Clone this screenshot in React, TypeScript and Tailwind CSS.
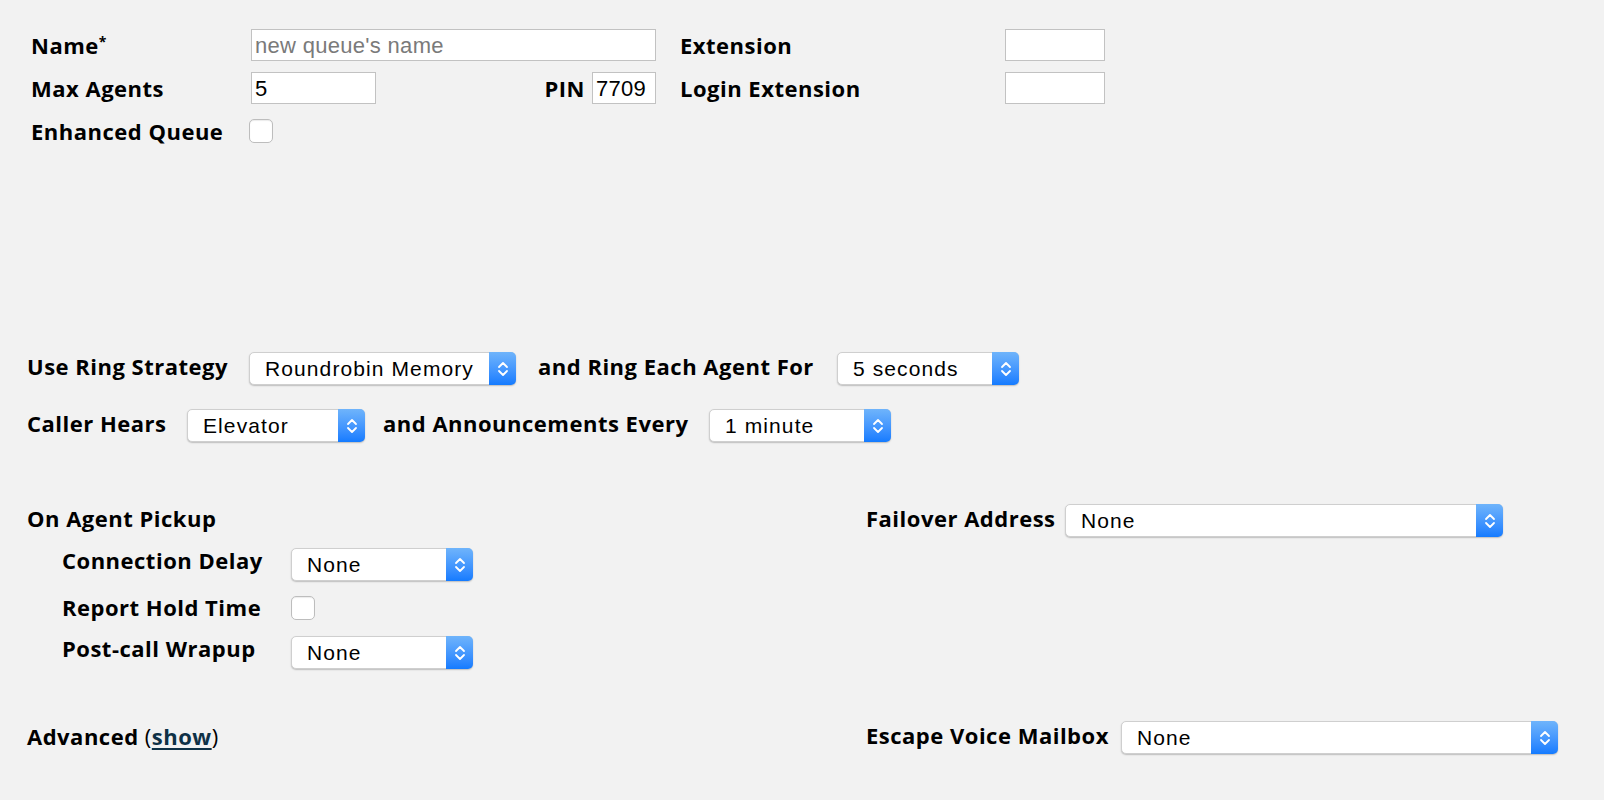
import React from "react";

function Chevrons() {
  return (
    <svg width="12" height="18" viewBox="0 0 12 18" fill="none">
      <path d="M2 7 L6 3 L10 7" stroke="white" strokeWidth="1.8" strokeLinecap="round" strokeLinejoin="round" />
      <path d="M2 11 L6 15 L10 11" stroke="white" strokeWidth="1.8" strokeLinecap="round" strokeLinejoin="round" />
    </svg>
  );
}

function Select({ value, className }: { value: string; className: string }) {
  return (
    <div
      className={
        "flex h-[33px] shrink-0 items-stretch rounded-[5px] border border-[#cfcfcf] bg-white shadow-[0_1px_1.5px_rgba(0,0,0,0.22)] " +
        className
      }
    >
      <div className="flex flex-1 items-center whitespace-nowrap pl-[15px] font-['Liberation_Sans',sans-serif] text-[21px] tracking-[1.1px] text-black">
        {value}
      </div>
      <div className="-my-px -mr-px flex w-[27px] items-center justify-center rounded-r-[5px] bg-gradient-to-b from-[#6fb4fb] to-[#137bff]">
        <Chevrons />
      </div>
    </div>
  );
}

function Checkbox() {
  return (
    <div className="h-[24px] w-[24px] shrink-0 rounded-[5px] border border-[#bdbdbd] bg-white shadow-[inset_0_1px_1px_rgba(0,0,0,0.08)]" />
  );
}

function TextInput({ value, placeholder, className }: { value?: string; placeholder?: string; className: string }) {
  return (
    <div
      className={
        "flex h-[32px] shrink-0 items-center overflow-hidden whitespace-nowrap border border-[#c2c2c2] bg-white px-[3px] font-['Liberation_Sans',sans-serif] text-[22px] tracking-[0.3px] " +
        className
      }
    >
      {value ? <span className="text-black">{value}</span> : <span className="text-[#7a7a7a]">{placeholder}</span>}
    </div>
  );
}

export default function App() {
  const label =
    "font-['Open_Sans',sans-serif] font-bold text-[22px] tracking-[0.5px] text-black leading-none whitespace-nowrap shrink-0";
  const lowLabel = label + " pb-[5px]";
  return (
    <div className="min-h-[800px] w-full bg-[#f2f2f2] text-black">
      {/* Top section */}
      <div className="pl-[31px] pt-[29px]">
        <div className="flex h-[32px] items-center">
          <div className={label + " w-[220px]"}>
            Name<sup className="text-[14px]">*</sup>
          </div>
          <TextInput placeholder="new queue's name" className="w-[405px]" />
          <div className={label + " ml-[24px] w-[325px]"}>Extension</div>
          <TextInput className="w-[100px]" />
        </div>
        <div className="mt-[11px] flex h-[32px] items-center">
          <div className={label + " w-[220px]"}>Max Agents</div>
          <div className="flex w-[405px] items-center justify-between">
            <TextInput value="5" className="h-[31px] w-[125px]" />
            <div className="flex items-center gap-[7px]">
              <div className={label}>PIN</div>
              <TextInput value="7709" className="w-[64px]" />
            </div>
          </div>
          <div className={label + " ml-[24px] w-[325px]"}>Login Extension</div>
          <TextInput className="w-[100px]" />
        </div>
        <div className="mt-[11px] flex h-[32px] items-center">
          <div className={label + " w-[218px]"}>Enhanced Queue</div>
          <Checkbox />
        </div>
      </div>

      {/* Ring strategy */}
      <div className="mt-[205px] pl-[27px]">
        <div className="flex items-center">
          <div className={lowLabel + " w-[222px]"}>Use Ring Strategy</div>
          <Select value="Roundrobin Memory" className="w-[267px]" />
          <div className={lowLabel + " ml-[22px] w-[299px]"}>and Ring Each Agent For</div>
          <Select value="5 seconds" className="w-[182px]" />
        </div>
        <div className="mt-[24px] flex items-center">
          <div className={lowLabel + " w-[160px]"}>Caller Hears</div>
          <Select value="Elevator" className="w-[178px]" />
          <div className={lowLabel + " ml-[18px] w-[326px]"}>and Announcements Every</div>
          <Select value="1 minute" className="w-[182px]" />
        </div>
      </div>

      {/* Lower two-column section */}
      <div className="mt-[62px] flex pl-[27px]">
        <div className="w-[839px] shrink-0">
          <div className="flex h-[33px] items-center">
            <div className={lowLabel}>On Agent Pickup</div>
          </div>
          <div className="pl-[35px]">
            <div className="mt-[11px] flex items-start">
              <div className={label + " w-[229px] pt-[1px]"}>Connection Delay</div>
              <Select value="None" className="w-[182px]" />
            </div>
            <div className="mt-[15px] flex items-center">
              <div className={label + " w-[229px] pb-[2px]"}>Report Hold Time</div>
              <Checkbox />
            </div>
            <div className="mt-[16px] flex items-start">
              <div className={label + " w-[229px] pt-[1px]"}>Post-call Wrapup</div>
              <Select value="None" className="w-[182px]" />
            </div>
          </div>
          <div className="mt-[51px] flex h-[33px] items-center">
            <div className={label + " pb-[2px]"}>
              Advanced{" "}
              <span className="font-normal">(</span>
              <span className="text-[#0f3146] underline decoration-[2px] underline-offset-[3px]">show</span>
              <span className="font-normal">)</span>
            </div>
          </div>
        </div>
        <div className="flex flex-1 flex-col">
          <div className="flex items-center">
            <div className={lowLabel + " w-[199px]"}>Failover Address</div>
            <Select value="None" className="w-[438px]" />
          </div>
          <div className="mt-[184px] flex items-center">
            <div className={lowLabel + " w-[255px]"}>Escape Voice Mailbox</div>
            <Select value="None" className="w-[437px]" />
          </div>
        </div>
      </div>
    </div>
  );
}
